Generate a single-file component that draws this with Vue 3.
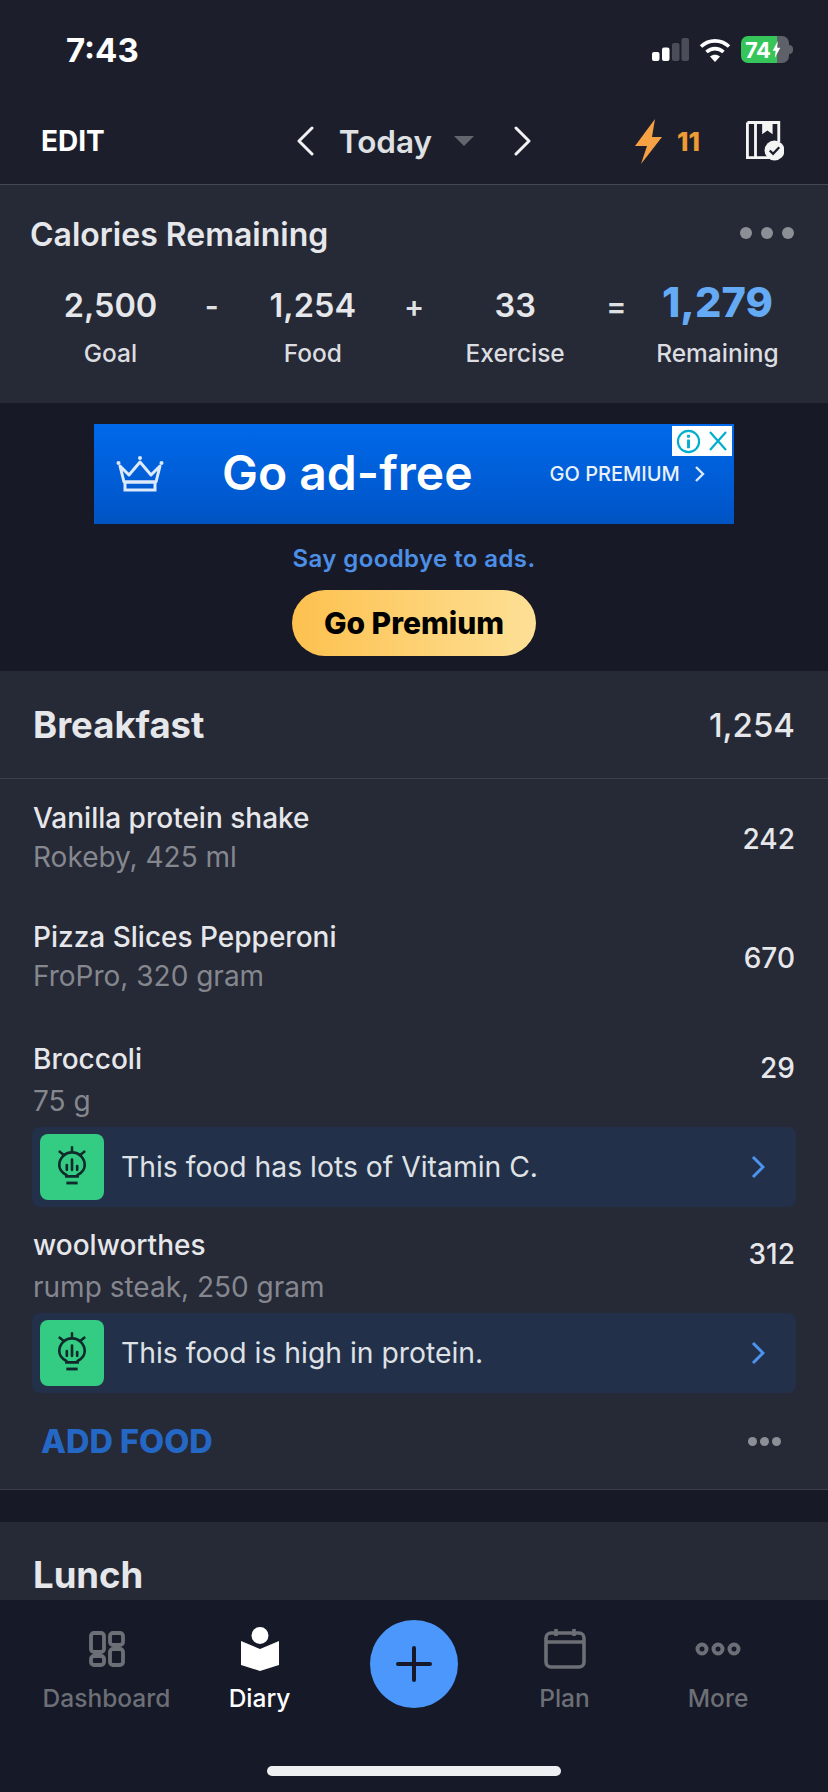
<template>
  <div class="phone">
    <header class="top">
      <div class="status">
        <span class="clock">7:43</span>
        <div class="status-icons">
          <svg class="signal" viewBox="0 0 37 23" width="37" height="23">
            <rect x="0" y="14" width="7.500" height="9" rx="2" fill="#fff" />
            <rect x="10" y="9.500" width="7.500" height="13.500" rx="2" fill="#fff" />
            <rect x="20" y="5" width="7.500" height="18" rx="2" fill="#4b4e58" />
            <rect x="29.500" y="0" width="7.500" height="23" rx="2" fill="#4b4e58" />
          </svg>
          <svg class="wifi" viewBox="0 0 32 24" width="32" height="24">
            <path d="M2 8.500C10 1 22 1 30 8.500" fill="none" stroke="#fff" stroke-width="3.600" />
            <path d="M7.500 14C12.500 9.500 19.500 9.500 24.500 14" fill="none" stroke="#fff" stroke-width="3.600" />
            <path d="M11 18.500C14 16 18 16 21 18.500L16 24Z" fill="#fff" />
          </svg>
          <div class="battery">
            <span class="battery-num">74</span>
            <svg viewBox="0 0 10 20" width="11" height="17" class="battery-bolt">
              <path d="M6.500 0 0.500 11.500H4L3 20 9.500 8H5.800Z" fill="#fff" />
            </svg>
          </div>
        </div>
      </div>
      <nav class="nav">
        <span class="edit">EDIT</span>
        <div class="date-nav">
          <svg viewBox="0 0 18 30" width="18" height="30" class="chev">
            <path d="M16 2 3 15l13 13" fill="none" stroke="#f1f2f4" stroke-width="3" stroke-linecap="round" stroke-linejoin="round" />
          </svg>
          <span class="today">Today</span>
          <span class="caret"></span>
          <svg viewBox="0 0 18 30" width="18" height="30" class="chev">
            <path d="M2 2l13 13L2 28" fill="none" stroke="#f1f2f4" stroke-width="3" stroke-linecap="round" stroke-linejoin="round" />
          </svg>
        </div>
        <div class="nav-right">
          <svg viewBox="0 0 27 45" width="27" height="45">
            <path d="M20 0 0 27H12L6 45 27 18H17Z" fill="#f5a144" />
          </svg>
          <span class="streak">11</span>
          <svg class="book" viewBox="0 0 40 42" width="38" height="40">
            <path d="M1.500 1.500H34.500V22M25 38.500H1.500V1.500M10 1.500V38.500" fill="none" stroke="#f4f4f5" stroke-width="3" />
            <path d="M17 1.500H28V14L22.500 10 17 14Z" fill="#f4f4f5" />
            <circle cx="30" cy="31" r="10.500" fill="#f4f4f5" />
            <path d="M25 31l3.500 3.500 6.500-7" fill="none" stroke="#1c1f2b" stroke-width="2.400" />
          </svg>
        </div>
      </nav>
    </header>

    <main class="scroll">
      <section class="summary">
        <div class="summary-head">
          <h2>Calories Remaining</h2>
          <div class="dots"><i></i><i></i><i></i></div>
        </div>
        <div class="equation">
          <template v-for="part in equation" :key="part.label">
            <div class="term" :class="{ accent: part.accent }">
              <strong>{{ part.value }}</strong>
              <span>{{ part.label }}</span>
            </div>
            <b v-if="part.op" class="op">{{ part.op }}</b>
          </template>
        </div>
      </section>

      <section class="ad">
        <div class="banner">
          <svg class="crown" viewBox="0 0 48 36" width="48" height="36">
            <path d="M4 10 13 19 24 6 35 19 44 10 40 26H8Z" fill="none" stroke="#dce9fb" stroke-width="3" stroke-linejoin="round" />
            <path d="M9 26H39V34H9Z" fill="none" stroke="#dce9fb" stroke-width="3" />
            <circle cx="2.500" cy="7" r="2" fill="#dce9fb" />
            <circle cx="45.500" cy="7" r="2" fill="#dce9fb" />
            <circle cx="24" cy="2" r="2" fill="#dce9fb" />
          </svg>
          <span class="banner-title">Go ad-free</span>
          <span class="banner-cta">GO PREMIUM</span>
          <svg viewBox="0 0 11 18" width="11" height="18">
            <path d="M2 2l7 7-7 7" fill="none" stroke="#dce9fb" stroke-width="2.400" />
          </svg>
          <div class="adchoice">
            <svg viewBox="0 0 26 26" width="25" height="25">
              <circle cx="13" cy="13" r="11" fill="none" stroke="#00aecd" stroke-width="2.200" />
              <rect x="11.500" y="11" width="3" height="9" fill="#00aecd" />
              <rect x="11.500" y="6" width="3" height="3" fill="#00aecd" />
            </svg>
            <svg viewBox="0 0 22 22" width="22" height="22">
              <path d="M3 2 19 20M19 2 3 20" fill="none" stroke="#00aecd" stroke-width="2.200" />
            </svg>
          </div>
        </div>
        <p class="bye">Say goodbye to ads.</p>
        <button type="button" class="premium">Go Premium</button>
      </section>

      <section class="meal">
        <div class="meal-head">
          <h3>Breakfast</h3>
          <span>1,254</span>
        </div>
        <div class="foods">
          <div v-for="food in foods" :key="food.name" class="food" :class="{ tipped: food.tip }">
            <div class="food-row">
              <div>
                <div class="food-name">{{ food.name }}</div>
                <div class="food-sub">{{ food.sub }}</div>
              </div>
              <span class="food-cal">{{ food.cal }}</span>
            </div>
            <div v-if="food.tip" class="tip">
              <div class="tip-icon">
                <svg viewBox="0 0 34 46" width="32" height="44">
                  <path d="M17 1v6M3 6l5 4M31 6l-5 4" fill="none" stroke="#10292a" stroke-width="2.600" />
                  <path d="M11 33v-1.500C6 29 3.500 25 3.500 21a13.500 13.500 0 0 1 27 0c0 4-2.500 8-7.500 10.500V33Z" fill="none" stroke="#10292a" stroke-width="2.800" />
                  <path d="M11 40h12" stroke="#10292a" stroke-width="3" />
                  <path d="M17 15v11M11.500 21v5M22.500 22v4" stroke="#10292a" stroke-width="2.800" stroke-linecap="round" />
                </svg>
              </div>
              <span class="tip-text">{{ food.tip }}</span>
              <svg viewBox="0 0 14 24" width="14" height="24">
                <path d="M2 2l10 10L2 22" fill="none" stroke="#4d94f0" stroke-width="3" />
              </svg>
            </div>
          </div>
        </div>
        <div class="meal-foot">
          <span class="add-food">ADD FOOD</span>
          <div class="dots small"><i></i><i></i><i></i></div>
        </div>
      </section>

      <section class="meal lunch">
        <div class="meal-head">
          <h3>Lunch</h3>
        </div>
      </section>
    </main>

    <footer class="tabs">
      <div class="tab-row">
        <div class="tab">
          <svg viewBox="0 0 36 36" width="36" height="36">
            <g fill="none" stroke="#6d6f76" stroke-width="3.800">
              <rect x="2" y="2" width="13" height="19" rx="3" />
              <rect x="21" y="2" width="13" height="12" rx="3" />
              <rect x="2" y="25" width="13" height="9" rx="3" />
              <rect x="21" y="18" width="13" height="16" rx="3" />
            </g>
          </svg>
          <span>Dashboard</span>
        </div>
        <div class="tab active">
          <svg viewBox="0 0 38 44" width="38" height="44">
            <circle cx="19" cy="8.500" r="8.500" fill="#fff" />
            <path d="M0 14 19 22 38 14V38L19 44 0 38Z" fill="#fff" />
          </svg>
          <span>Diary</span>
        </div>
        <button type="button" class="add" aria-label="Add">
          <svg viewBox="0 0 36 36" width="36" height="36">
            <path d="M18 2v32M2 18h32" stroke="#15192a" stroke-width="4" stroke-linecap="round" />
          </svg>
        </button>
        <div class="tab">
          <svg viewBox="0 0 42 40" width="42" height="40">
            <g fill="none" stroke="#6d6f76" stroke-width="3.600">
              <rect x="2" y="4" width="38" height="34" rx="5" />
              <path d="M2 13h38M12 0v7M30 0v7" />
            </g>
          </svg>
          <span>Plan</span>
        </div>
        <div class="tab">
          <svg viewBox="0 0 46 14" width="46" height="14">
            <g fill="none" stroke="#6d6f76" stroke-width="4">
              <circle cx="7" cy="7" r="4.500" />
              <circle cx="23" cy="7" r="4.500" />
              <circle cx="39" cy="7" r="4.500" />
            </g>
          </svg>
          <span>More</span>
        </div>
      </div>
      <div class="home-bar"></div>
    </footer>
  </div>
</template>

<script setup>
const equation = [
  { value: '2,500', label: 'Goal', op: '-' },
  { value: '1,254', label: 'Food', op: '+' },
  { value: '33', label: 'Exercise', op: '=' },
  { value: '1,279', label: 'Remaining', accent: true }
]

const foods = [
  { name: 'Vanilla protein shake', sub: 'Rokeby, 425 ml', cal: 242 },
  { name: 'Pizza Slices Pepperoni', sub: 'FroPro, 320 gram', cal: 670 },
  { name: 'Broccoli', sub: '75 g', cal: 29, tip: 'This food has lots of Vitamin C.' },
  { name: 'woolworthes', sub: 'rump steak, 250 gram', cal: 312, tip: 'This food is high in protein.' }
]
</script>

<style>
html,
body {
  margin: 0;
  background: #171a26;
}
</style>

<style scoped>
.phone {
  width: 828px;
  height: 1792px;
  display: flex;
  flex-direction: column;
  overflow: hidden;
  background: #171a26;
  font-family: Inter, "Liberation Sans", sans-serif;
  color: #e6e7ea;
}

.top {
  height: 184px;
  flex: none;
  background: #1c1f2b;
  border-bottom: 1px solid #454853;
  box-sizing: content-box;
}

.status {
  height: 99px;
  display: flex;
  align-items: center;
  justify-content: space-between;
  padding: 0 35px 0 66px;
}

.clock {
  font-size: 33px;
  font-weight: 700;
  color: #fff;
}

.status-icons {
  display: flex;
  align-items: center;
  gap: 10px;
}

.battery {
  width: 48px;
  height: 27px;
  margin-right: 4px;
  border-radius: 7px;
  background: linear-gradient(90deg, #36c55a 75%, #5f6169 75%);
  display: flex;
  align-items: center;
  padding-left: 4px;
  box-sizing: border-box;
  position: relative;
}

.battery::after {
  content: "";
  position: absolute;
  left: 48px;
  top: 9px;
  width: 4px;
  height: 9px;
  border-radius: 0 4px 4px 0;
  background: #5f6169;
}

.battery-num {
  font-size: 22px;
  font-weight: 700;
  color: #fff;
  letter-spacing: -0.5px;
}

.battery-bolt {
  margin-left: 1px;
}

.nav {
  height: 84px;
  display: grid;
  grid-template-columns: 1fr auto 1fr;
  align-items: center;
  padding: 0 41px;
}

.edit {
  font-size: 28px;
  font-weight: 700;
  color: #fff;
}

.date-nav {
  display: flex;
  align-items: center;
}

.today {
  font-size: 31.500px;
  font-weight: 600;
  color: #dfe0e3;
  margin-left: 25px;
}

.caret {
  width: 0;
  height: 0;
  margin: 0 40px 0 22px;
  border-left: 10px solid transparent;
  border-right: 10px solid transparent;
  border-top: 10px solid #63656c;
}

.nav-right {
  display: flex;
  align-items: center;
  justify-content: flex-end;
  padding-right: 3px;
}

.streak {
  font-size: 26px;
  font-weight: 800;
  color: #ee9b33;
  margin-left: 15px;
}

.book {
  margin-left: 46px;
}

.scroll {
  flex: 1;
  min-height: 0;
  overflow: hidden;
}

.summary {
  height: 218px;
  box-sizing: border-box;
  background: #262936;
  padding: 0 34px 0 30px;
}

.summary-head {
  height: 99px;
  display: flex;
  align-items: center;
  justify-content: space-between;
}

.summary-head h2 {
  margin: 0;
  font-size: 32px;
  font-weight: 600;
  color: #e6e7ea;
}

.dots {
  display: flex;
  gap: 9px;
  margin-top: -3px;
}

.dots i {
  width: 12px;
  height: 12px;
  border-radius: 50%;
  background: #8d8f97;
}

.dots.small {
  gap: 3px;
  margin-top: 0;
}

.dots.small i {
  width: 9px;
  height: 9px;
}

.equation {
  display: grid;
  grid-template-columns: 145px 1fr 145px 1fr 145px 1fr 145px;
  align-items: start;
  margin: 0 -6px 0 -2px;
  padding: 2px 10px 0;
}

.term {
  display: flex;
  flex-direction: column;
  align-items: center;
  gap: 12px;
  white-space: nowrap;
}

.term strong {
  font-size: 32.500px;
  font-weight: 600;
  line-height: 40px;
  color: #e6e7ea;
}

.term span {
  font-size: 24.500px;
  line-height: 30px;
  font-weight: 500;
  color: #dcdde0;
}

.term.accent {
  margin-top: -4px;
}

.term.accent strong {
  font-size: 41.500px;
  font-weight: 800;
  color: #65aaf4;
}

.term.accent span {
  margin-top: 4px;
}

.op {
  text-align: center;
  font-size: 30px;
  font-weight: 600;
  line-height: 40px;
  color: #dfe0e3;
}

.ad {
  height: 268px;
  box-sizing: border-box;
  padding-top: 21px;
  display: flex;
  flex-direction: column;
  align-items: center;
}

.banner {
  width: 640px;
  height: 100px;
  flex: none;
  position: relative;
  display: flex;
  align-items: center;
  padding: 0 28px 0 22px;
  box-sizing: border-box;
  background: linear-gradient(180deg, #0069ea 0%, #0059cf 75%, #0054c2 100%);
  color: #e9f1fc;
}

.banner-title {
  font-size: 48px;
  font-weight: 600;
  margin-left: 58px;
  margin-top: -4px;
  color: #fff;
}

.banner-cta {
  font-size: 20px;
  font-weight: 500;
  margin-left: 77px;
  margin-right: 14px;
}

.adchoice {
  position: absolute;
  top: 2px;
  right: 2px;
  width: 60px;
  height: 30px;
  background: #fff;
  display: flex;
  align-items: center;
  justify-content: center;
  gap: 6px;
}

.bye {
  margin: 22px 0 0;
  font-size: 24px;
  line-height: 26px;
  font-weight: 600;
  color: #4d8fe6;
  letter-spacing: 0.4px;
}

.premium {
  margin-top: 18px;
  width: 244px;
  height: 66px;
  border: none;
  border-radius: 33px;
  background: linear-gradient(90deg, #fdc14e 0%, #fde096 100%);
  font-family: inherit;
  font-size: 30px;
  font-weight: 800;
  color: #000;
}

.meal {
  background: #262936;
  border-bottom: 1px solid #3d404b;
}

.meal-head {
  height: 107px;
  display: flex;
  align-items: center;
  justify-content: space-between;
  padding: 0 33px;
  border-bottom: 1px solid #3d404b;
}

.meal-head h3 {
  margin: 0;
  font-size: 36.500px;
  font-weight: 700;
  color: #e6e7ea;
}

.meal-head span {
  font-size: 33px;
  font-weight: 500;
  color: #e6e7ea;
}

.foods {
  padding-top: 20px;
}

.food {
  height: 119px;
  box-sizing: border-box;
}

.food.tipped {
  height: auto;
  padding-bottom: 19px;
}

.food.tipped:nth-child(3) {
  margin-top: 3px;
}

.food-row {
  display: flex;
  align-items: center;
  justify-content: space-between;
  padding: 0 33px;
}

.food-name {
  font-size: 28px;
  line-height: 38px;
  font-weight: 500;
  color: #e6e7ea;
}

.food-sub {
  margin-top: 1px;
  font-size: 28px;
  line-height: 38px;
  color: #85878f;
}

.tipped .food-sub {
  margin-top: 4px;
}

.food-cal {
  font-size: 28px;
  font-weight: 500;
  color: #e6e7ea;
  margin-top: 2px;
}

.tipped .food-cal {
  align-self: flex-start;
  margin-top: 11px;
}

.tip {
  margin: 7px 32px 0;
  height: 80px;
  box-sizing: border-box;
  padding: 0 31px 0 8px;
  border-radius: 8px;
  background: #22304a;
  display: flex;
  align-items: center;
}

.tip-icon {
  width: 64px;
  height: 66px;
  flex: none;
  border-radius: 8px;
  background: #34cb82;
  display: flex;
  align-items: center;
  justify-content: center;
}

.tip-text {
  flex: 1;
  margin-left: 17px;
  font-size: 28.300px;
  color: #dfe1e5;
}

.meal-foot {
  height: 77px;
  box-sizing: border-box;
  padding: 0 47px 19px 41px;
  display: flex;
  align-items: center;
  justify-content: space-between;
}

.add-food {
  font-size: 32.500px;
  font-weight: 800;
  color: #2567c5;
}

.lunch {
  margin-top: 32px;
  border-bottom: none;
}

.lunch .meal-head {
  height: 106px;
  border: none;
}

.tabs {
  height: 192px;
  flex: none;
  background: #161927;
  position: relative;
}

.tab-row {
  display: grid;
  grid-template-columns: 153px 153px 155px 147px 160px;
  padding: 0 30px;
  box-sizing: border-box;
}

.tab {
  display: flex;
  flex-direction: column;
  align-items: center;
  height: 120px;
  padding-top: 26px;
  box-sizing: border-box;
  color: #6d6f76;
}

.tab svg {
  height: 46px;
}

.tab span {
  margin-top: 11px;
  font-size: 24.500px;
  font-weight: 500;
}

.tab.active {
  color: #fff;
}

.add {
  width: 88px;
  height: 88px;
  margin: 20px auto 0;
  padding: 0;
  border: none;
  border-radius: 50%;
  background: #4b97fb;
  display: flex;
  align-items: center;
  justify-content: center;
}

.home-bar {
  position: absolute;
  left: 267px;
  bottom: 16px;
  width: 294px;
  height: 10px;
  border-radius: 5px;
  background: #eeeff0;
}
</style>
